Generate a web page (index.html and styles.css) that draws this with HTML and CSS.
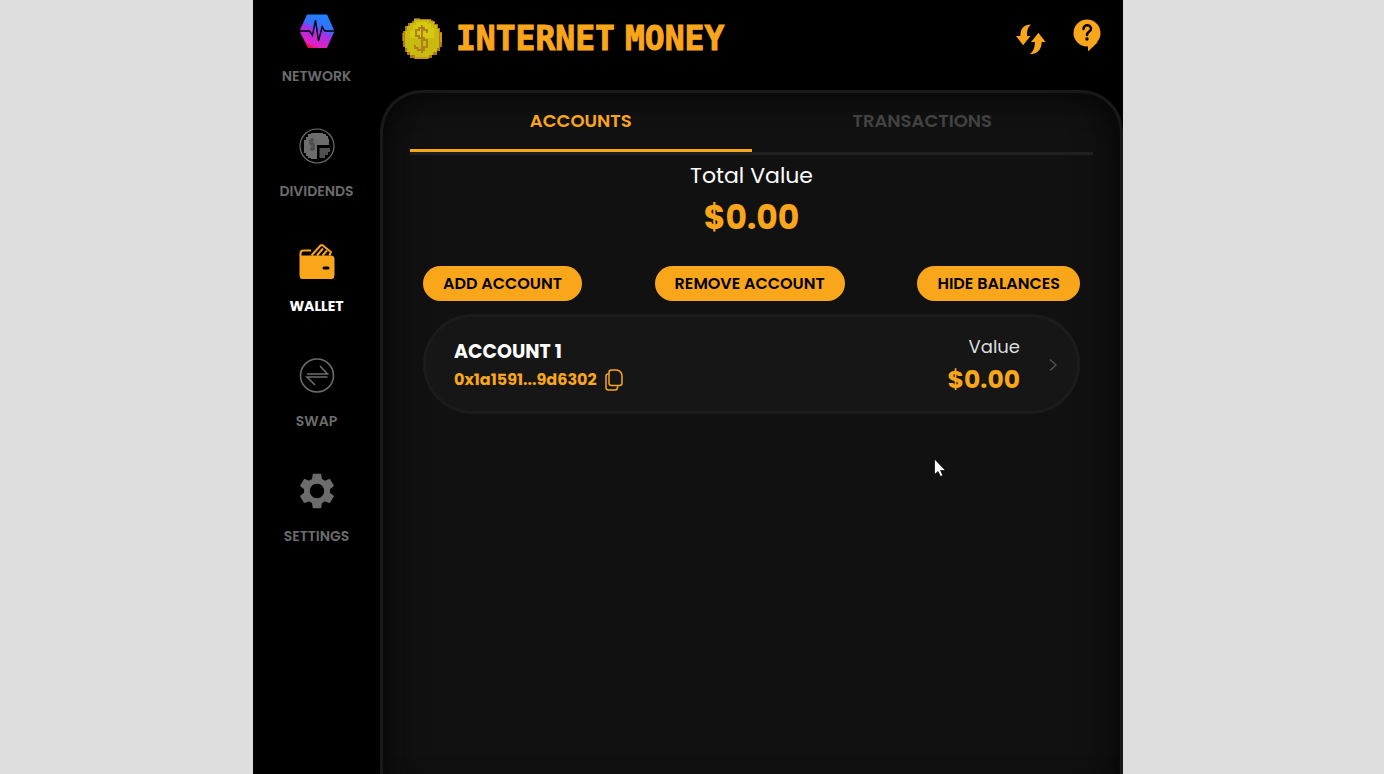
FILE: index.html
```html
<!DOCTYPE html>
<html lang="en">
<head>
  <meta charset="UTF-8" />
  <meta name="viewport" content="width=device-width, initial-scale=1.0"/>
  <title>Internet Money</title>
  <link rel="stylesheet" href="styles.css">
</head>
<body>
  <div class="app">
    <nav class="sidebar">
      <a class="nav-item" href="#network">
        <svg class="nav-icon" viewBox="0 0 36 36">
          <defs>
            <linearGradient id="pulse" x1="0.75" y1="0" x2="0.3" y2="1">
              <stop offset="0" stop-color="#1c86ff"/>
              <stop offset="0.4" stop-color="#3a6cfa"/>
              <stop offset="0.48" stop-color="#9a35f0"/>
              <stop offset="0.88" stop-color="#e51ec2"/>
              <stop offset="1" stop-color="#e3132c"/>
            </linearGradient>
          </defs>
          <path d="M8 1.500h20l7.500 16.500L28 35H9L.5 18z" fill="url(#pulse)"/>
          <path d="M0 18h10.500l3 4.200 3-15 3 21 3.700-14.500 2.500 4.300H36" fill="none" stroke="#000" stroke-width="1.400"/>
        </svg>
        <span>NETWORK</span>
      </a>
      <a class="nav-item" href="#dividends">
        <svg class="nav-icon" viewBox="0 0 36 36">
          <circle cx="18" cy="18" r="17" fill="none" stroke="#6c6c6c" stroke-width="1.200"/>
          <path d="M12 5h12v1h3v2h2v3h1v6H18v14h-6v-1H9v-2H7v-3H5V12h2V9h2V6h3z" fill="#6c6c6c"/>
          <path d="M20.500 20H31v4h-2v3h-3v3h-5.500z" fill="#505050"/>
          <path d="M15 12h-4v4h4v5h-4M13 10v13" fill="none" stroke="#4a4a4a" stroke-width="1.500"/>
        </svg>
        <span>DIVIDENDS</span>
      </a>
      <a class="nav-item active" href="#wallet">
        <svg class="nav-icon" viewBox="0 0 36 36">
          <path d="M.5 12.500h31q4 0 4 4V32q0 4.500-5 4.500h-25q-5 0-5-4.500z" fill="#faa61a"/>
          <path d="M1.500 13v-2.500q0-3 3-3H12" fill="none" stroke="#faa61a" stroke-width="2"/>
          <path d="M12.500 12.500l9-10q1.200-1 2.400 0l8 6.500-1.500 3.500M18 12.500l6-7M23.500 12.500l4.500-5" fill="none" stroke="#faa61a" stroke-width="2"/>
          <rect x="23.500" y="23.500" width="7" height="3" rx="1.500"/>
        </svg>
        <span>WALLET</span>
      </a>
      <a class="nav-item" href="#swap">
        <svg class="nav-icon" viewBox="0 0 36 36" fill="none" stroke="#6c6c6c" stroke-width="1.600">
          <circle cx="18" cy="17.500" r="16.500"/>
          <path d="M8 16h20.500L21 8M28.500 19H8l8 8"/>
        </svg>
        <span>SWAP</span>
      </a>
      <a class="nav-item" href="#settings">
        <svg class="nav-icon" viewBox="2 2 20 20" fill="#6c6c6c">
          <path d="M19.140 12.940c.04-.3.06-.61.06-.94 0-.32-.02-.64-.07-.94l2.030-1.580c.18-.14.23-.41.12-.61l-1.920-3.320c-.12-.22-.37-.29-.59-.22l-2.390.96c-.5-.38-1.030-.7-1.620-.94l-.36-2.540c-.04-.24-.24-.41-.48-.41h-3.840c-.24 0-.43.17-.47.41l-.36 2.540c-.59.24-1.130.57-1.620.94l-2.390-.96c-.22-.08-.47 0-.59.22L2.740 8.870c-.12.21-.08.47.12.61l2.030 1.580c-.05.3-.09.63-.09.94s.02.64.07.94l-2.030 1.580c-.18.14-.23.41-.12.61l1.920 3.320c.12.22.37.29.59.22l2.390-.96c.5.38 1.030.7 1.620.94l.36 2.540c.05.24.24.41.48.41h3.840c.24 0 .44-.17.47-.41l.36-2.540c.59-.24 1.130-.56 1.620-.94l2.390.96c.22.08.47 0 .59-.22l1.920-3.320c.12-.22.07-.47-.12-.61l-2.010-1.580zM12 16c-2.200 0-4-1.800-4-4s1.800-4 4-4 4 1.800 4 4-1.800 4-4 4z"/>
        </svg>
        <span>SETTINGS</span>
      </a>
    </nav>

    <div class="main">
      <header class="header">
        <svg class="coin" viewBox="0 0 40 42">
          <path d="M12 1h17v2h4v3h3v4h2v4h2v15h-2v4h-3v4h-5v3h-4v1H13v-1H8v-3H5v-3H3v-5H1V13h2V8h3V5h4V3h2z" fill="#b0780e"/>
          <path d="M12 2h15v2h5v3h3v4h2v19h-2v4h-4v3h-4v2H13v-2H8v-3H5v-4H3V13h2V8h3V5h4z" fill="#c9ba10"/>
          <path d="M14 4h11v2h4v4h3v10H8v-8h3V7h3z" fill="#d6ca10"/>
          <path d="M25 15v-3h-3v-2h-5v2h-3v6h3v2h5v2h3v7h-3v3h-6v-2h-3v-3M20 7v28" fill="none" stroke="#b0801a" stroke-width="2"/>
          <path d="M12 1h6M27 3h4M1 15v8M39 15v9M12 40h15" stroke="#dcb73c" stroke-width="1" fill="none"/>
        </svg>
        <h1><span>INTERNET</span> <span>MONEY</span></h1>
        <button class="icon-button" aria-label="Refresh">
          <svg width="30" height="32" viewBox="0 0 31 32" fill="#faa61a">
            <path d="M15.500 1C8 1 4.500 5 4.500 13H0l7.300 9.500L15 13h-3.500C11 8 12 4 15.500 1z"/>
            <path d="M14.500 31.500c8 0 12-5 12-12.500h4L23.200 9.500 15.500 19h4c0 5-1 9-5 12.500z"/>
          </svg>
        </button>
        <button class="icon-button" aria-label="Help">
          <svg width="28" height="40" viewBox="0 4 28 40">
            <circle cx="14" cy="18" r="13.500" fill="#faa61a"/>
            <path d="M15 29v7.500L25 27z" fill="#faa61a"/>
            <path d="M10.500 14c0-5 7.500-5 7.500 0 0 2.500-4 2.800-4 6" fill="none" stroke="#000" stroke-width="2.500" stroke-linecap="round"/>
            <circle cx="14" cy="24" r="1.700"/>
          </svg>
        </button>
      </header>

      <main class="panel">
        <div class="tabs">
          <button class="tab selected">ACCOUNTS</button>
          <button class="tab">TRANSACTIONS</button>
        </div>

        <section class="content">
          <h2 class="total-label">Total Value</h2>
          <p class="total-value">$0.00</p>

          <div class="actions">
            <button class="pill">ADD ACCOUNT</button>
            <button class="pill">REMOVE ACCOUNT</button>
            <button class="pill">HIDE BALANCES</button>
          </div>

          <article class="account">
            <div class="account-info">
              <h3>ACCOUNT 1</h3>
              <div class="address">
                <span>0x1a1591...9d6302</span>
                <button class="copy" aria-label="Copy address">
                  <svg width="18" height="22" viewBox="0 0 18 22" fill="none" stroke="#faa61a" stroke-width="1.500">
                    <path d="M6.500 1H12q5 1.500 5 6v7q0 2.500-2.500 2.500h-8Q4 16.500 4 14V3.500Q4 1 6.500 1z"/>
                    <path d="M4 5H3Q1 5 1 7v11.500Q1 21 3.500 21H10q2.500 0 2.500-2.500v-2"/>
                  </svg>
                </button>
              </div>
            </div>
            <div class="account-value">
              <span class="value-label">Value</span>
              <span class="value">$0.00</span>
            </div>
            <svg class="chevron" viewBox="0 0 8 14" fill="none" stroke="#555" stroke-width="1.200">
              <path d="M1 1.500L7 7l-6 5.500"/>
            </svg>
          </article>
        </section>
      </main>
    </div>

    <svg class="pointer" viewBox="0 0 12 19">
      <path d="M.5 1v15.500L4 13.500l2.500 5 2.500-1-2.500-5h5z" fill="#fff" stroke="#000" stroke-width=".7"/>
    </svg>
  </div>
</body>
</html>
```

FILE: styles.css
```css
* {
  box-sizing: border-box;
}
body {
  margin: 0;
  padding-right: 8px;
  background: #dedede;
  font-family: Poppins, Inter, sans-serif;
  color: white;
}
h1, h2, h3, p {
  margin: 0;
}
button {
  border: 0;
  padding: 0;
  background: none;
  font-family: inherit;
  cursor: pointer;
}
svg {
  display: block;
}
.app {
  position: relative;
  display: flex;
  max-width: 870px;
  min-height: 100vh;
  margin: 0 auto;
  background: black;
}
.sidebar {
  display: flex;
  flex-direction: column;
  gap: 42px;
  width: 127px;
  padding-top: 13px;
}
.nav-item {
  display: flex;
  flex-direction: column;
  align-items: center;
  gap: 17px;
  color: #6c6c6c;
  font-size: 14px;
  font-weight: 600;
  line-height: 20px;
  text-decoration: none;
}
.nav-item.active {
  color: white;
  font-weight: 700;
}
.nav-icon {
  width: 36px;
  height: 36px;
}
.main {
  display: flex;
  flex: 1;
  flex-direction: column;
}
.header {
  display: flex;
  align-items: center;
  height: 90px;
  padding: 0 22px 13px;
}
.coin {
  width: 40px;
  height: 42px;
}
.header h1 {
  display: flex;
  flex: 1;
  gap: 10px;
  margin-left: 14px;
  color: #faa61a;
  font-family: "DejaVu Sans Mono", monospace;
  font-size: 33px;
  font-weight: 700;
  line-height: 40px;
  -webkit-text-stroke: 1px #faa61a;
}
.icon-button {
  margin-left: 27px;
}
.panel {
  flex: 1;
  padding: 0 27px;
  border: 3px solid #191919;
  border-bottom: 0;
  border-radius: 42px 42px 0 0;
  background: #111;
  box-shadow: inset 0 30px 30px -30px #060606, inset 30px 0 40px -30px #060606, inset -30px 0 40px -30px #060606;
}
.tabs {
  display: flex;
  border-bottom: 3px solid #202020;
}
.tab {
  flex: 1;
  padding: 16px 0 17px;
  border-bottom: 3px solid transparent;
  color: #424242;
  font-size: 18px;
  font-weight: 600;
  line-height: 23px;
}
.tab.selected {
  border-color: #faa61a;
  color: #faa61a;
}
.content {
  padding: 4px 13px;
  text-align: center;
}
.total-label {
  font-size: 22px;
  font-weight: 400;
  line-height: 33px;
}
.total-value {
  color: #faa61a;
  font-size: 33px;
  font-weight: 700;
  line-height: 52px;
}
.actions {
  display: flex;
  justify-content: space-between;
  margin: 22px 0 13px;
}
.pill {
  padding: 6px 20px;
  border-radius: 18px;
  background: #faa61a;
  color: black;
  font-size: 16px;
  font-weight: 600;
  line-height: 23px;
}
.account {
  display: flex;
  align-items: center;
  padding: 15px 20px 13px 28px;
  border: 3px solid #1c1c1c;
  border-radius: 50px;
  background: #161616;
}
.account-info {
  flex: 1;
  text-align: left;
}
.account h3 {
  font-size: 19px;
  font-weight: 700;
  line-height: 30px;
}
.address {
  display: flex;
  align-items: center;
  gap: 8px;
  color: #faa61a;
  font-size: 16px;
  font-weight: 700;
  line-height: 26px;
}
.account-value {
  display: flex;
  flex-direction: column;
  text-align: right;
}
.value-label {
  color: #ddd;
  font-size: 18px;
  line-height: 30px;
}
.value {
  color: #faa61a;
  font-size: 25px;
  font-weight: 700;
  line-height: 36px;
}
.chevron {
  width: 8px;
  height: 14px;
  margin-left: 29px;
}
.pointer {
  position: absolute;
  top: 458px;
  left: 681px;
  width: 12px;
  height: 19px;
}
```
